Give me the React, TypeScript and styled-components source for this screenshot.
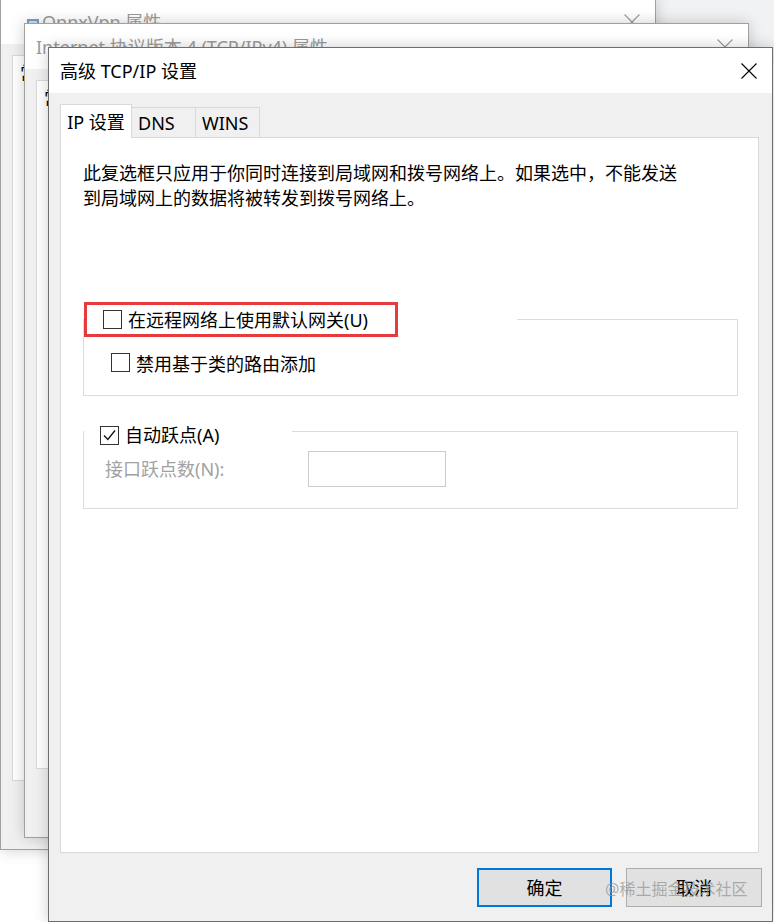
import React from "react";
import styled, { createGlobalStyle } from "styled-components";

const FONT = `"Noto Sans", "Noto Sans CJK SC", sans-serif`;

const GlobalStyle = createGlobalStyle`
  html, body { margin: 0; padding: 0; background: #ffffff; }
  body { font-family: ${FONT}; }
  * { box-sizing: border-box; }
`;

const Desktop = styled.div`
  position: relative;
  width: 774px;
  height: 922px;
  overflow: hidden;
  background: #ffffff;
  font-family: ${FONT};
  font-size: 18px;
  color: #000;
`;

const Backdrop = styled.div`
  position: absolute;
  left: 630px;
  top: 0;
  width: 144px;
  height: 64px;
  background: #f1f2f4;
`;

const Window = styled.div<{ $x: number; $y: number; $w: number; $h: number; $active?: boolean }>`
  position: absolute;
  isolation: isolate;
  left: ${(p) => p.$x}px;
  top: ${(p) => p.$y}px;
  width: ${(p) => p.$w}px;
  height: ${(p) => p.$h}px;
  border: 1px solid ${(p) => (p.$active ? "#6e6e6e" : "#a0a0a0")};
  background: #f0f0f0;
  display: flex;
  flex-direction: column;
  box-shadow: 0 0 14px rgba(0, 0, 0, 0.2);
`;

const TitleBar = styled.div<{ $active?: boolean }>`
  height: 45px;
  flex: none;
  background: #ffffff;
  display: flex;
  align-items: center;
  padding-left: 11px;
  color: ${(p) => (p.$active ? "#000" : "#9b9b9b")};
  white-space: nowrap;
`;

const TitleIcon = styled.span`
  width: 16px;
  height: 16px;
  margin-left: 14px;
  display: inline-flex;
  flex: none;
`;

const TitleText = styled.span`
  line-height: 24px;
`;

const CloseBox = styled.span`
  margin-left: auto;
  width: 47px;
  height: 45px;
  display: flex;
  align-items: center;
  justify-content: center;
  flex: none;
`;

const Body = styled.div`
  flex: 1;
  min-height: 0;
  display: flex;
  flex-direction: column;
  padding: 11px 13px 0 11px;
`;

const TabStrip = styled.div`
  display: flex;
  align-items: flex-end;
  height: 33px;
  flex: none;
  position: relative;
  z-index: 1;
`;

const Tab = styled.div<{ $selected?: boolean; $w: number }>`
  width: ${(p) => p.$w}px;
  height: ${(p) => (p.$selected ? 34 : 30)}px;
  margin-bottom: ${(p) => (p.$selected ? -1 : 0)}px;
  border: 1px solid #d9d9d9;
  border-bottom: none;
  background: ${(p) => (p.$selected ? "#ffffff" : "#f0f0f0")};
  display: flex;
  align-items: center;
  justify-content: ${(p) => (p.$selected ? "center" : "flex-start")};
  padding-left: ${(p) => (p.$selected ? 0 : 6)}px;
  line-height: 24px;
  white-space: nowrap;
  & + & {
    margin-left: -1px;
  }
`;

const Panel = styled.div`
  flex: 1;
  min-height: 0;
  background: #ffffff;
  border: 1px solid #d9d9d9;
  padding: 23px 20px 0 22px;
  display: flex;
  flex-direction: column;
`;

const Description = styled.p`
  margin: 0;
  width: 600px;
  line-height: 25px;
`;

const Group = styled.fieldset<{ $gap: number }>`
  margin: ${(p) => p.$gap}px 0 0 0;
  padding: 0;
  min-width: 0;
  border: 1px solid #dcdcdc;
`;

const Legend = styled.legend<{ $padLeft: number; $padRight: number; $padTop: number }>`
  padding: ${(p) => p.$padTop}px ${(p) => p.$padRight}px 0 ${(p) => p.$padLeft}px;
  margin: 0;
  display: flex;
  align-items: center;
  gap: 6px;
  line-height: 20px;
`;

const RedMark = styled.span`
  width: 314px;
  height: 35px;
  border: 3px solid #e63a3d;
  padding-left: 16px;
  display: flex;
  align-items: center;
  gap: 6px;
  line-height: 20px;
`;

const GroupContent = styled.div<{ $pad: string }>`
  padding: ${(p) => p.$pad};
`;

const CheckRow = styled.label`
  display: flex;
  align-items: center;
  gap: 6px;
  height: 25px;
`;

const CheckBox = styled.span`
  width: 19px;
  height: 19px;
  border: 1px solid #333333;
  background: #ffffff;
  display: inline-flex;
  align-items: center;
  justify-content: center;
  flex: none;
`;

const FieldRow = styled.div`
  display: flex;
  align-items: center;
  height: 36px;
`;

const FieldLabel = styled.span`
  width: 203px;
  color: #a2a2a2;
  line-height: 24px;
`;

const FieldInput = styled.span`
  width: 138px;
  height: 36px;
  border: 1px solid #cccccc;
  background: #ffffff;
`;

const Footer = styled.div`
  height: 68px;
  flex: none;
  display: flex;
  justify-content: flex-end;
  align-items: flex-start;
  gap: 14px;
  padding: 15px 10px 0 0;
`;

const Button = styled.span<{ $default?: boolean }>`
  width: ${(p) => (p.$default ? 135 : 136)}px;
  height: 39px;
  background: #e1e1e1;
  border: ${(p) => (p.$default ? "2px solid #0078d7" : "1px solid #adadad")};
  display: flex;
  align-items: center;
  justify-content: center;
  line-height: 24px;
`;

const Watermark = styled.span`
  position: absolute;
  left: 605px;
  top: 877px;
  font-size: 16px;
  line-height: 24px;
  color: rgba(150, 150, 150, 0.75);
  white-space: nowrap;
  pointer-events: none;
`;

const CloseIcon = ({ color }: { color: string }) => (
  <svg width="16" height="16" viewBox="0 0 16 16">
    <path d="M0.5 0.5 L15.5 15.5 M15.5 0.5 L0.5 15.5" stroke={color} strokeWidth="1.1" fill="none" />
  </svg>
);

const CheckMark = () => (
  <svg width="17" height="17" viewBox="0 0 17 17">
    <polyline points="3,8.5 6.8,12.5 14,3.5" stroke="#111" strokeWidth="1.3" fill="none" />
  </svg>
);

const NetIcon = () => (
  <svg width="16" height="16" viewBox="0 0 16 16">
    <rect x="1" y="5" width="12" height="8" fill="#7a9cc6" />
    <rect x="3" y="7" width="8" height="4" fill="#cfe0f4" />
  </svg>
);

type Tb = { label: string; w: number; selected?: boolean };

const DialogFrame = ({
  x, y, w, h, active, title, icon, tabs, children,
}: {
  x: number; y: number; w: number; h: number; active?: boolean; title: string;
  icon?: boolean; tabs: Tb[]; children?: React.ReactNode;
}) => (
  <Window $x={x} $y={y} $w={w} $h={h} $active={active}>
    <TitleBar $active={active}>
      {icon && (
        <TitleIcon>
          <NetIcon />
        </TitleIcon>
      )}
      <TitleText>{title}</TitleText>
      <CloseBox>
        <CloseIcon color={active ? "#000" : "#9b9b9b"} />
      </CloseBox>
    </TitleBar>
    <Body>
      <TabStrip>
        {tabs.map((t) => (
          <Tab key={t.label} $w={t.w} $selected={t.selected}>
            {t.label}
          </Tab>
        ))}
      </TabStrip>
      <Panel>{children}</Panel>
    </Body>
    <Footer>
      <Button $default>确定</Button>
      <Button>取消</Button>
    </Footer>
  </Window>
);

export default function App() {
  return (
    <>
      <GlobalStyle />
      <Desktop>
        <Backdrop />
        <DialogFrame
          x={0}
          y={-2}
          w={656}
          h={852}
          icon
          title="OnnxVpn 属性"
          tabs={[
            { label: "常规", w: 52, selected: true },
            { label: "选项", w: 56 },
            { label: "安全", w: 56 },
            { label: "网络", w: 56 },
            { label: "共享", w: 56 },
          ]}
        />
        <DialogFrame
          x={24}
          y={23}
          w={725}
          h={815}
          title="Internet 协议版本 4 (TCP/IPv4) 属性"
          tabs={[{ label: "常规", w: 52, selected: true }]}
        />
        <DialogFrame
          x={48}
          y={47}
          w={725}
          h={875}
          active
          title="高级 TCP/IP 设置"
          tabs={[
            { label: "IP 设置", w: 72, selected: true },
            { label: "DNS", w: 65 },
            { label: "WINS", w: 65 },
          ]}
        >
          <Description>
            此复选框只应用于你同时连接到局域网和拨号网络上。如果选中，不能发送到局域网上的数据将被转发到拨号网络上。
          </Description>
          <Group $gap={91}>
            <Legend $padLeft={0} $padRight={119} $padTop={0}>
              <RedMark>
                <CheckBox />
                <span>在远程网络上使用默认网关(U)</span>
              </RedMark>
            </Legend>
            <GroupContent $pad="13px 0 20px 27px">
              <CheckRow>
                <CheckBox />
                <span>禁用基于类的路由添加</span>
              </CheckRow>
            </GroupContent>
          </Group>
          <Group $gap={21}>
            <Legend $padLeft={16} $padRight={73} $padTop={8}>
              <CheckBox>
                <CheckMark />
              </CheckBox>
              <span>自动跃点(A)</span>
            </Legend>
            <GroupContent $pad="6px 0 21px 21px">
              <FieldRow>
                <FieldLabel>接口跃点数(N):</FieldLabel>
                <FieldInput />
              </FieldRow>
            </GroupContent>
          </Group>
        </DialogFrame>
        <Watermark>@稀土掘金技术社区</Watermark>
      </Desktop>
    </>
  );
}
